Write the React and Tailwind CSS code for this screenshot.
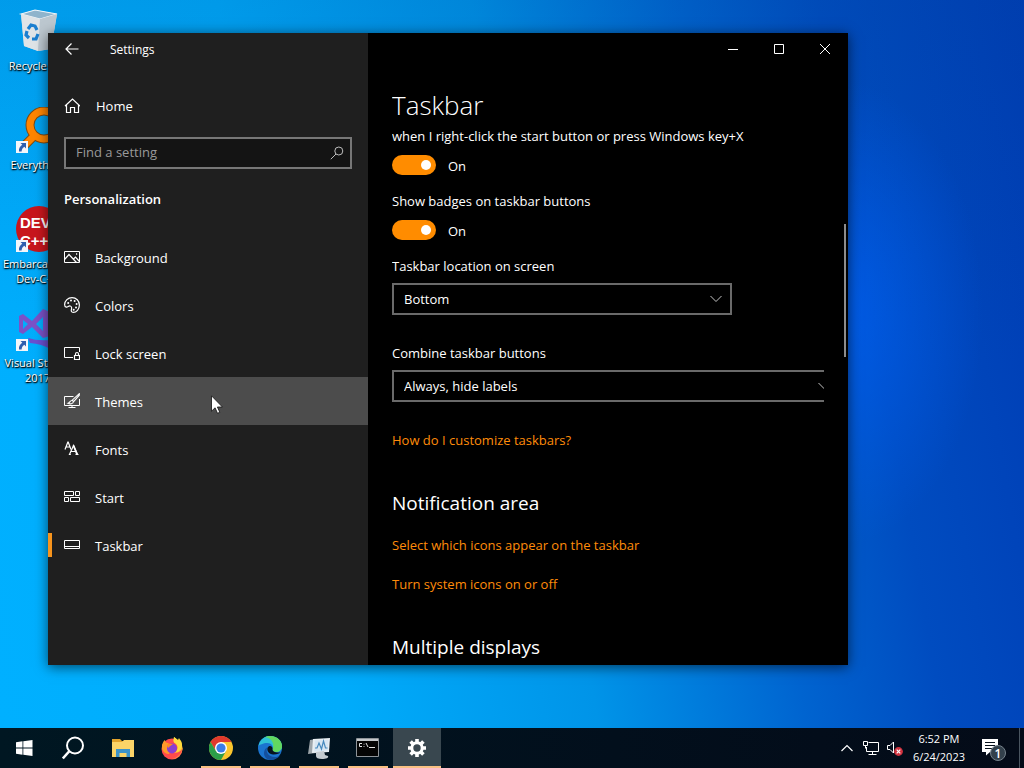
import React, { useState } from "react";

const NavIcon = ({ children }) => (
  <svg
    viewBox="0 0 16 16"
    className="size-4 shrink-0"
    fill="none"
    stroke="currentColor"
    strokeWidth="1"
    aria-hidden="true"
  >
    {children}
  </svg>
);

const navItems = [
  {
    name: "Background",
    icon: (
      <>
        <path d="M.5 2.500h15v11H.5z" />
        <path d="M.5 10.500l4.500-5 7.500 8M9.500 10l2-2 4 4.500" strokeWidth="1.200" />
        <path d="M12 5h1.200" strokeWidth="1.400" />
      </>
    ),
  },
  {
    name: "Colors",
    icon: (
      <>
        <path d="M8 .6C12.200 .6 15.400 3.800 15.400 8c0 4.200-3 7.400-6.200 7.400-1.800 0-2.200-1.300-1.800-2.800.4-1.600.4-3.200-1.200-3.600-1.600-.4-2.400 1.500-3.900 1.200C.6 9.800.6 8.300.6 7.500.8 3.600 4 .6 8 .6z" strokeWidth="1.200" />
        <g fill="currentColor" stroke="none">
          <circle cx="4.200" cy="6" r="1" />
          <circle cx="7" cy="3.600" r="1" />
          <circle cx="10.600" cy="4" r="1" />
          <circle cx="12.600" cy="7" r="1" />
          <circle cx="12" cy="10.500" r="1" />
          <circle cx="9.700" cy="12.800" r="1" />
        </g>
      </>
    ),
  },
  {
    name: "Lock screen",
    icon: (
      <>
        <path d="M9 12.500H.5v-10h15V7" />
        <path d="M10.500 10.500h5v4h-5zM11.500 10.500V9c0-2 3-2 3 0v1.500" strokeWidth="1.200" />
      </>
    ),
  },
  {
    name: "Themes",
    icon: (
      <>
        <path d="M9.500 3.500h-9v9h15V6M8 12.500v2M4.500 14.500h7" />
        <path d="M15.300.7L8.200 7.200l1.400 1.500 5.700-6.500zM8 7.500c-2.200-.2-2 2.300-4 2.800 2 1 5.200.6 5.400-1.500" strokeWidth="1.100" />
      </>
    ),
  },
  {
    name: "Fonts",
    icon: (
      <>
        <path d="M1 8.500L3.800 1.200h.4L7 8.500M2 6h4" strokeWidth="1.200" />
        <path d="M5.500 13.500l4-9 4 9M6.800 10.500h5M4.800 13.500h2M11.500 13.500h3" strokeWidth="1.200" />
        <path d="M9.500 4.500l3.600 9" strokeWidth="1.800" />
      </>
    ),
  },
  {
    name: "Start",
    icon: (
      <path d="M.5 2.500h9v4h-9zM11.500 2.500h4v4h-4zM.5 8.500h4v4h-4zM6.500 8.500h9v4h-9z" />
    ),
  },
  {
    name: "Taskbar",
    icon: <path d="M.5 3.500h15v8H.5zM.5 9.500h15" />,
  },
];

const ShortcutArrow = () => (
  <svg viewBox="0 0 12 12" className="absolute bottom-[2px] left-[2px] size-3" aria-hidden="true">
    <path d="M0 0h12v12H0z" fill="#f4f6fa" />
    <path d="M4.500 2h5.500v5.500L8.300 5.800C6.500 7 5.800 8.300 5.600 10.400H3C2.600 7.500 4 5 6.300 3.800z" fill="#2f5fae" />
  </svg>
);

const desktopIcons = [
  {
    label: "Recycle Bin",
    shortcut: false,
    art: (
      <>
        <path d="M7 6l14-4 22 4-6 35-13 2-14-5z" fill="#d5dbe0" />
        <path d="M7 6l14-4 22 4-17 5z" fill="#8fb4cc" stroke="#eef5fa" strokeWidth="1.200" />
        <path d="M7 6l19 5-2 32-14-5z" fill="#dfe4e7" />
        <path d="M26 11l17-5-6 35-13 2z" fill="#bcc7cf" />
        <g fill="none" stroke="#1b7fd0" strokeWidth="3.200">
          <path d="M14 21l3-4 4 1 2 4" />
          <path d="M24 26l-2 5h-4" />
          <path d="M15 30l-3-3 1-4" />
        </g>
      </>
    ),
  },
  {
    label: "Everything",
    shortcut: true,
    art: (
      <>
        <path d="M22 27L8 41" stroke="#7c4a12" strokeWidth="9" />
        <circle cx="30" cy="18" r="14" fill="none" stroke="#7c4a12" strokeWidth="9" />
        <path d="M22 27L8 41" stroke="#ff8500" strokeWidth="7" />
        <circle cx="30" cy="18" r="14" fill="none" stroke="#ff8500" strokeWidth="7" />
      </>
    ),
  },
  {
    label: "Embarcadero Dev-C++",
    shortcut: true,
    art: (
      <>
        <circle cx="25" cy="23" r="23" fill="#c8161d" />
        <text x="6" y="22" fill="#fff" fontSize="15" fontWeight="700" fontFamily="Liberation Sans, sans-serif">DEV</text>
        <text x="6" y="40" fill="#fff" fontSize="15" fontWeight="700" fontFamily="Liberation Sans, sans-serif">C++</text>
      </>
    ),
  },
  {
    label: "Visual Studio 2017",
    shortcut: true,
    art: (
      <>
        <path d="M5 11l4-2 9 7L29 4l7 3v24l-7 2-11-11-9 7-4-2zM9 15v9l5-5zM29 12l-7 7 7 7z" fill="#7b52c7" fillRule="evenodd" />
        <path d="M14 33q9 3 22 2v9q-8-5-20-6z" fill="#6a4fd0" />
      </>
    ),
  },
];

const DesktopIcon = ({ label, shortcut, art }) => (
  <li className="flex h-[99px] flex-col items-center">
    <div className="relative mb-[2px] size-12">
      <svg viewBox="0 0 48 48" className="size-12" aria-hidden="true">
        {art}
      </svg>
      {shortcut && <ShortcutArrow />}
    </div>
    <span className="text-center text-[11px] leading-[15px] text-white [text-shadow:0_1px_2px_#000,1px_1px_1px_#000]">
      {label}
    </span>
  </li>
);

const Toggle = ({ id, label }) => {
  const [on, setOn] = useState(true);
  return (
    <div className="mb-4">
      <label htmlFor={id} className="block whitespace-nowrap">
        {label}
      </label>
      <div className="mt-[9px] flex h-5 items-center gap-3">
        <input
          id={id}
          type="checkbox"
          role="switch"
          checked={on}
          onChange={(e) => setOn(e.target.checked)}
          className="flex h-5 w-11 shrink-0 appearance-none items-center rounded-full bg-[#666] px-[5px] before:size-[10px] before:rounded-full before:bg-white before:content-[''] checked:justify-end checked:bg-[#ff8c00]"
        />
        <span className="mt-[2px]">{on ? "On" : "Off"}</span>
      </div>
    </div>
  );
};

const SelectField = ({ id, label, options, width }) => (
  <div className="mb-7">
    <label htmlFor={id} className="block">
      {label}
    </label>
    <div className={`relative mt-[7px] ${width}`}>
      <select
        id={id}
        className="h-8 w-full appearance-none border-2 border-[#6a6a6a] bg-black px-[10px] leading-5 text-white"
      >
        {options.map((o) => (
          <option key={o}>{o}</option>
        ))}
      </select>
      <svg
        viewBox="0 0 12 8"
        className="pointer-events-none absolute right-[10px] top-3 h-2 w-3"
        fill="none"
        stroke="#c4c4c4"
        aria-hidden="true"
      >
        <path d="M.5 1L6 6.500 11.500 1" />
      </svg>
    </div>
  </div>
);

const taskbarApps = [
  {
    name: "Start",
    art: (
      <path d="M3 6.200l6.500-.9v6.200H3zM10.300 5.200L19.500 4v7.500h-9.200zM3 12.500h6.500v6.200L3 17.800zM10.300 12.500h9.200V20l-9.200-1.200z" fill="#fff" />
    ),
  },
  {
    name: "Search",
    art: (
      <g fill="none" stroke="#fff" strokeWidth="2">
        <circle cx="13" cy="9.500" r="8" />
        <path d="M7.500 15L.8 22.500" strokeWidth="2.600" />
      </g>
    ),
  },
  {
    name: "File Explorer",
    art: (
      <>
        <path d="M1 3h8l2 2h12v4H1z" fill="#e2a32c" />
        <path d="M1 6h10l2-2h10v17H1z" fill="#fbd468" />
        <path d="M5 13h14v8h-3.500v-4h-7v4H5z" fill="#3c93c9" />
      </>
    ),
  },
  {
    name: "Firefox",
    art: (
      <>
        <circle cx="12" cy="13" r="10.500" fill="#ff4b4b" />
        <path d="M2 9C3 6 4 4.500 5 4c0 2 1 3 3 3l5 4-4 7c-3 0-6-2-7-5z" fill="#ff9a2a" />
        <circle cx="12" cy="12.500" r="5" fill="#8a3fd0" />
        <path d="M7 9c2-2 5-1 6 0-3 0-3 2-5 3z" fill="#ff8a1f" />
        <path d="M14 1c0 4 3 4 4 7s0 7-4 9c5 0 8-3 9-6-1 8-6 12-11 12 10-2 12-11 9-17-1-1-1 0-2-1-2-1-3-3-5-4z" fill="#ffc534" />
        <path d="M14 1c-1 4-1 5 2 7 2 2 2 5 0 8 4-1 6-4 6-7 0-4-2-5-3-7l-1 2z" fill="#ffdc3d" />
      </>
    ),
  },
  {
    name: "Chrome",
    running: true,
    art: (
      <>
        <circle cx="12" cy="12" r="12" fill="#fbc52d" />
        <path d="M1.600 6A12 12 0 0 1 22.400 6H12L7 15z" fill="#e0392d" />
        <path d="M1.600 6A12 12 0 0 0 12 24l5-9-10 0z" fill="#2c9e48" />
        <circle cx="12" cy="12" r="6" fill="#fff" />
        <circle cx="12" cy="12" r="4.600" fill="#3b7de8" />
      </>
    ),
  },
  {
    name: "Edge",
    running: true,
    art: (
      <>
        <circle cx="12" cy="12" r="12" fill="#1b74cf" />
        <path d="M.5 10C2 3 7 0 12 0c8 0 12 6 12 10 0 4-3 6-6 6-3 0-4-1-3.500-2.500C16 10 13 7 9.500 7 5 7 1.500 9 .5 10z" fill="#2fc0d6" />
        <path d="M12 0c8 0 12 6 12 10 0 4-3 6-6 6-3 0-4-1-3.500-2.500C17 8 14 2 7 1.200 8.500.4 10 0 12 0z" fill="#62d860" />
        <path d="M9.500 11C7 15 10 21 17 21c2 0 4-.5 5.500-2C20 22.500 16 24 12 24 5 23 4 14 9.500 11z" fill="#14509e" />
        <path d="M14.500 13.500C15 11 13 9.500 11 10.200 8 11.500 9 18 15 18.500c4 .2 6-1 7.500-2-2 .3-8 0-8-3z" fill="#07131d" />
      </>
    ),
  },
  {
    name: "Resource Monitor",
    running: true,
    art: (
      <>
        <path d="M3 4l6-1v14l-8 1z" fill="#9da5aa" />
        <path d="M6 3l17-1-1 14-17 1z" fill="#e8eef2" />
        <path d="M8 4.500l13.500-.8-.8 10.800L7 15.500z" fill="#d7e6f2" />
        <path d="M8 12h2l2-5 2.500 6 2-8 2 7h2" fill="none" stroke="#4689bd" strokeWidth="1.200" />
        <path d="M9 16l8-1 1 4 3 1c1 2-2 3-6 3s-6-1-6-3z" fill="#c4cbd0" />
      </>
    ),
  },
  {
    name: "Command Prompt",
    running: true,
    art: (
      <>
        <path d="M.5 2.500h22v18h-22z" fill="#050505" stroke="#8f9499" />
        <path d="M1 3h21v2H1z" fill="#c5c9cc" />
        <path d="M6 7.500H3.500v3H6M8 7.800v.8M8 10v.8M10 7l2 4M13 11.500h6" fill="none" stroke="#e5e5e5" />
      </>
    ),
  },
  {
    name: "Settings",
    running: true,
    active: true,
    art: (
      <>
        <g stroke="#fff" strokeWidth="3.600">
          <path d="M12 3v4M12 17v4M3 12h4M17 12h4M5.600 5.600l3 3M15.400 15.400l3 3M5.600 18.400l3-3M15.400 8.600l3-3" />
        </g>
        <circle cx="12" cy="12" r="5.200" fill="none" stroke="#fff" strokeWidth="3" />
      </>
    ),
  },
];

const TaskbarButton = ({ name, art, running, active }) => (
  <button
    aria-label={name}
    className={`flex h-10 w-12 flex-col items-center justify-between ${active ? "bg-[#39474f]" : ""}`}
  >
    <svg viewBox="0 0 24 24" className="mt-2 size-6" aria-hidden="true">
      {art}
    </svg>
    {running && <span className={`h-[2px] bg-[#f9c083] ${active ? "w-12" : "w-10"}`} />}
  </button>
);

const SettingsWindow = () => {
  const [selected, setSelected] = useState("Taskbar");

  return (
    <section
      aria-label="Settings"
      className="absolute bottom-[63px] left-12 right-44 top-[33px] flex overflow-hidden bg-black text-[13px] leading-5 text-white shadow-[0_2px_12px_rgba(0,0,0,0.6)]"
    >
      <aside className="w-80 shrink-0 bg-[#1f1f1f]">
        <div className="flex h-8 items-center gap-[31px] px-[17px]">
          <button aria-label="Back">
            <svg viewBox="0 0 14 14" className="size-[14px]" fill="none" stroke="#fff" strokeWidth="1.200">
              <path d="M13.500 7H1.200M6.500 1.500L1 7l5.500 5.500" />
            </svg>
          </button>
          <span className="pt-[2px] text-[12px]">Settings</span>
        </div>

        <a href="#home" className="mb-[7px] mt-[17px] flex h-12 items-center gap-4 px-4">
          <NavIcon>
            <path d="M1 8L8.500 1 16 8M2.500 6.800v7.700h4v-5h4v5h4V6.800" strokeWidth="1.200" />
          </NavIcon>
          <span>Home</span>
        </a>

        <div className="relative mx-4">
          <input
            type="search"
            aria-label="Find a setting"
            placeholder="Find a setting"
            className="h-8 w-full appearance-none border-2 border-[#777] bg-[#141414] px-[10px] pb-[2px] outline-none placeholder:text-[#9a9a9a]"
          />
          <svg
            viewBox="0 0 14 14"
            className="pointer-events-none absolute right-2 top-[9px] size-[14px]"
            fill="none"
            stroke="#bdbdbd"
            aria-hidden="true"
          >
            <circle cx="8.800" cy="5" r="4" />
            <path d="M6 8L.8 13.200" />
          </svg>
        </div>

        <h2 className="mb-6 mt-5 px-4 font-semibold">Personalization</h2>

        <nav>
          {navItems.map((item) => (
            <a
              key={item.name}
              href={`#${item.name}`}
              onClick={() => setSelected(item.name)}
              className={`relative flex h-12 items-center gap-[15px] px-4 ${
                item.name === "Themes" ? "bg-[#4c4c4c]" : ""
              }`}
            >
              {selected === item.name && (
                <span className="absolute left-0 top-3 h-6 w-1 bg-[#f7941d]" />
              )}
              <NavIcon>{item.icon}</NavIcon>
              <span className="pt-[2px]">{item.name}</span>
            </a>
          ))}
        </nav>
      </aside>

      <div className="flex min-w-0 flex-1 flex-col">
        <div className="flex h-8 shrink-0 justify-end">
          <button aria-label="Minimize" className="grid w-[46px] place-items-center">
            <svg viewBox="0 0 10 10" className="size-[10px]" stroke="#fff">
              <path d="M0 5.500h10" />
            </svg>
          </button>
          <button aria-label="Maximize" className="grid w-[46px] place-items-center">
            <svg viewBox="0 0 10 10" className="size-[10px]" fill="none" stroke="#fff">
              <path d="M.5.5h9v9h-9z" />
            </svg>
          </button>
          <button aria-label="Close" className="grid w-[46px] place-items-center">
            <svg viewBox="0 0 10 10" className="size-[10px]" stroke="#fff">
              <path d="M0 0l10 10M10 0L0 10" />
            </svg>
          </button>
        </div>

        <main className="mx-6 min-h-0 flex-1 overflow-hidden">
          <h1 className="mb-[3px] mt-[22px] text-[26px] font-light leading-9">Taskbar</h1>
          <Toggle id="powershell" label="when I right-click the start button or press Windows key+X" />
          <Toggle id="badges" label="Show badges on taskbar buttons" />
          <SelectField
            id="location"
            label="Taskbar location on screen"
            options={["Bottom", "Left", "Top", "Right"]}
            width="w-[340px]"
          />
          <SelectField
            id="combine"
            label="Combine taskbar buttons"
            options={["Always, hide labels", "When taskbar is full", "Never"]}
            width="w-[448px]"
          />
          <a href="#help" className="block text-[#ff8c0a]">
            How do I customize taskbars?
          </a>
          <h2 className="mb-[18px] mt-[39px] text-[19px] leading-7">Notification area</h2>
          <a href="#icons" className="mb-[19px] block text-[#ff8c0a]">
            Select which icons appear on the taskbar
          </a>
          <a href="#system" className="block text-[#ff8c0a]">
            Turn system icons on or off
          </a>
          <h2 className="mt-[39px] text-[19px] leading-7">Multiple displays</h2>
        </main>
      </div>

      {/* scroll thumb */}
      <span className="absolute right-[2px] top-[191px] h-[133px] w-[2px] bg-[#8c8c8c]" />
    </section>
  );
};

const App = () => (
  <div className="flex h-screen flex-col overflow-hidden bg-[#0050d0] font-['Open_Sans',sans-serif]">
    <div className="relative min-h-0 flex-1 bg-[radial-gradient(ellipse_14%_32%_at_82%_43%,rgba(0,100,255,0.6),transparent),linear-gradient(180deg,rgba(0,70,150,0.18),transparent_50%),linear-gradient(80deg,#00b0ff_0%,#00acfb_30%,#0094e8_52%,#0064d0_70%,#004cc0_82%,#003cb4_100%)]">
      <ul className="absolute left-0 top-2 w-[75px]">
        {desktopIcons.map((icon) => (
          <DesktopIcon key={icon.label} {...icon} />
        ))}
      </ul>

      <SettingsWindow />

      <svg viewBox="0 0 12 19" className="pointer-events-none absolute left-[211px] top-[395px] h-[19px] w-3" aria-hidden="true">
        <path d="M.5.8v15.400l3.600-3.400 2.400 5.500 2.300-1-2.400-5.300h5z" fill="#fff" stroke="#111" strokeWidth=".8" />
      </svg>
    </div>

    <footer className="flex h-10 shrink-0 justify-between bg-[linear-gradient(90deg,#001722,#020f1c_60%,#040b18)] text-white">
      <div className="flex gap-px pl-px">
        {taskbarApps.map((app) => (
          <TaskbarButton key={app.name} {...app} />
        ))}
      </div>

      <div className="flex items-center">
        <button aria-label="Show hidden icons" className="mr-[10px]">
          <svg viewBox="0 0 12 8" className="h-2 w-3" fill="none" stroke="#fff" strokeWidth="1.200">
            <path d="M.5 7L6 1.500 11.500 7" />
          </svg>
        </button>
        <button aria-label="Network" className="mr-2">
          <svg viewBox="0 0 16 16" className="size-4" fill="none" stroke="#fff">
            <path d="M5.500 2.500h10v9h-12V7M9.500 11.500v3M5.500 14.500h8M.5 1.500h4v4h-4zM2.500 5.500v3" />
          </svg>
        </button>
        <button aria-label="Volume muted" className="mr-[10px]">
          <svg viewBox="0 0 16 16" className="size-4" fill="none" stroke="#fff">
            <path d="M.5 5.500h2.500l3.500-3.500v11l-3.500-3.500H.5z" />
            <circle cx="11.500" cy="11.500" r="4.400" fill="#d1323f" stroke="none" />
            <path d="M9.700 9.700l3.600 3.600M13.300 9.700l-3.600 3.600" strokeWidth="1.200" />
          </svg>
        </button>
        <div className="mr-4 text-center text-[11px] leading-[18px]">
          <div>6:52 PM</div>
          <div>6/24/2023</div>
        </div>
        <button aria-label="Notifications" className="mr-3">
          <svg viewBox="0 0 26 26" className="size-[26px]">
            <path d="M1 4h16v13H9l-4 3.500V17H1z" fill="#fff" />
            <path d="M4 7.500h10M4 10.500h10M4 13.500h7" stroke="#06101c" />
            <circle cx="17" cy="18" r="7.500" fill="#33404b" stroke="#76828c" />
            <text x="17" y="22.500" textAnchor="middle" fill="#fff" fontSize="12" fontWeight="600">1</text>
          </svg>
        </button>
        <span className="mr-1 h-10 w-px bg-[#4a5560]" />
      </div>
    </footer>
  </div>
);

export default App;
